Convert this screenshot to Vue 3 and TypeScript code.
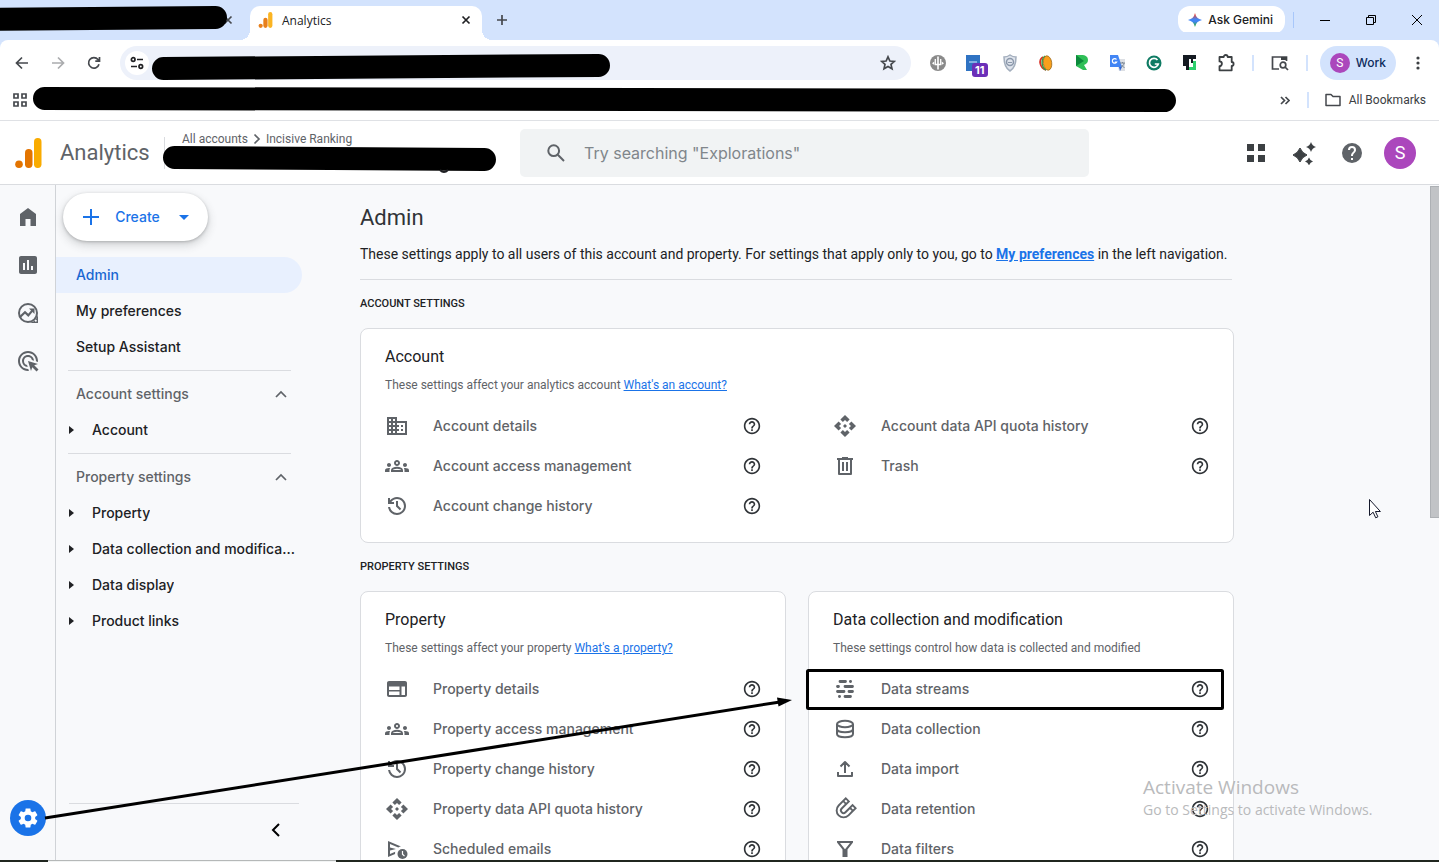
<script setup lang="ts">
import { ref } from 'vue'

interface Row {
  icon: string
  label: string
}

interface NavGroup {
  title: string
  items: string[]
}

const icons: Record<string, string> = {
  home: '<path d="M4 21V9l8-6 8 6v12h-5.5v-7h-5v7z"/>',
  reports:
    '<path d="M19 3H5c-1.1 0-2 .9-2 2v14c0 1.1.9 2 2 2h14c1.1 0 2-.9 2-2V5c0-1.1-.9-2-2-2zM9 17H7v-7h2v7zm4 0h-2V7h2v10zm4 0h-2v-4h2v4z"/>',
  explore:
    '<circle cx="12" cy="12" r="9" fill="none" stroke="currentColor" stroke-width="2"/><path d="M22 12v10H12c5 0 10-4 10-10z"/><circle cx="19.8" cy="19.8" r="1" fill="#f8f9fb"/><path d="M4 16l5-4.800 3.300 3.200 4.200-5" fill="none" stroke="currentColor" stroke-width="2.200"/><path d="M13 7.500h5.500V13z"/>',
  advertising:
    '<path d="M11.710 17.990A5.993 5.993 0 0 1 6 12c0-3.310 2.690-6 6-6 3.220 0 5.840 2.530 5.990 5.710l-2.100-.630a3.999 3.999 0 1 0-4.810 4.810l.630 2.100zM22 12c0 .300-.010.600-.040.900l-1.970-.590c.010-.100.010-.210.010-.310 0-4.420-3.580-8-8-8s-8 3.580-8 8 3.580 8 8 8c.100 0 .210 0 .310-.010l.590 1.970c-.300.030-.600.040-.900.040-5.520 0-10-4.480-10-10S6.480 2 12 2s10 4.480 10 10zm-3.770 4.260L22 15l-10-3 3 10 1.260-3.770 4.270 4.270 1.980-1.980-4.280-4.260z"/>',
  gear:
    '<path d="M19.140 12.940c.040-.300.060-.610.060-.940 0-.320-.020-.640-.070-.940l2.030-1.580c.180-.140.230-.410.120-.610l-1.920-3.320c-.120-.220-.370-.290-.590-.220l-2.390.960c-.500-.380-1.030-.700-1.620-.940l-.360-2.540c-.040-.240-.240-.410-.480-.410h-3.840c-.240 0-.430.170-.470.410l-.360 2.540c-.590.240-1.130.570-1.620.940l-2.390-.960c-.220-.080-.470 0-.590.220L2.740 8.870c-.120.210-.080.470.120.610l2.030 1.580c-.050.300-.090.630-.090.940s.020.640.070.940l-2.030 1.580c-.180.140-.230.410-.120.610l1.920 3.320c.120.220.370.290.590.220l2.390-.960c.500.380 1.030.700 1.620.940l.360 2.540c.050.240.240.410.480.410h3.840c.240 0 .440-.170.470-.410l.360-2.540c.590-.240 1.130-.560 1.620-.940l2.390.960c.220.080.470 0 .590-.220l1.920-3.320c.120-.220.070-.470-.120-.610l-2.010-1.580zM12 15.300a3.300 3.300 0 1 1 0-6.600 3.300 3.300 0 0 1 0 6.600z"/>',
  domain:
    '<path d="M12 7V3H2v18h20V7H12zM6 19H4v-2h2v2zm0-4H4v-2h2v2zm0-4H4V9h2v2zm0-4H4V5h2v2zm4 12H8v-2h2v2zm0-4H8v-2h2v2zm0-4H8V9h2v2zm0-4H8V5h2v2zm10 12h-8v-2h2v-2h-2v-2h2v-2h-2V9h8v10zm-2-8h-2v2h2v-2zm0 4h-2v2h2v-2z"/>',
  groups:
    '<path d="M4 13c1.100 0 2-.900 2-2s-.900-2-2-2-2 .900-2 2 .900 2 2 2zm1.130 1.100c-.370-.060-.740-.100-1.130-.100-.990 0-1.930.210-2.780.580A2.010 2.010 0 0 0 0 16.430V18h4.500v-1.610c0-.830.230-1.610.630-2.290zM20 13c1.100 0 2-.900 2-2s-.900-2-2-2-2 .900-2 2 .900 2 2 2zm4 3.430c0-.810-.480-1.530-1.220-1.850A6.950 6.950 0 0 0 20 14c-.390 0-.760.040-1.130.100.400.680.630 1.460.630 2.290V18H24v-1.570zm-7.760-2.780A10 10 0 0 0 12 12.750c-1.630 0-3.070.390-4.240.900A2.990 2.990 0 0 0 6 16.390V18h12v-1.610c0-1.180-.680-2.260-1.760-2.740zM8.070 16c.090-.230.130-.390.910-.690.970-.380 1.990-.560 3.020-.560s2.050.180 3.020.560c.770.300.810.460.910.690H8.070zM12 8c.550 0 1 .450 1 1s-.450 1-1 1-1-.450-1-1 .450-1 1-1m0-2c-1.660 0-3 1.340-3 3s1.340 3 3 3 3-1.340 3-3-1.340-3-3-3z"/>',
  history:
    '<path d="M12 21q-3.450 0-6.012-2.287T3.050 13H5.100q.350 2.600 2.313 4.300T12 19q2.925 0 4.963-2.037T19 12t-2.037-4.962T12 5q-1.725 0-3.225.800T6.250 8H9v2H3V4h2v2.350q1.275-1.600 3.113-2.475T12 3q1.875 0 3.513.713t2.850 1.924t1.925 2.850T21 12t-.712 3.513t-1.925 2.850t-2.850 1.925T12 21m2.800-4.800L11 12.400V7h2v4.600l3.200 3.200z"/>',
  api:
    '<path d="M14 12l-2 2-2-2 2-2 2 2zm-2-6l2.120 2.120 2.500-2.500L12 1 7.380 5.620l2.500 2.500L12 6zm-6 6l2.120-2.120-2.500-2.500L1 12l4.620 4.620 2.500-2.500L6 12zm12 0l-2.120 2.120 2.500 2.500L23 12l-4.620-4.620-2.500 2.500L18 12zm-6 6l-2.120-2.120-2.500 2.500L12 23l4.620-4.620-2.500-2.500L12 18z"/>',
  trash:
    '<path d="M4 4h5V3h6v1h5v2H4z"/><path d="M6 5v15h12V5M10 8v9M14 8v9" fill="none" stroke="currentColor" stroke-width="2" stroke-linejoin="round"/>',
  web:
    '<path d="M20 4H4c-1.100 0-2 .900-2 2v12c0 1.100.900 2 2 2h16c1.100 0 2-.900 2-2V6c0-1.100-.900-2-2-2zm-5.500 14H4v-3.500h10.500V18zm0-5H4V9.500h10.500V13zm5.500 5h-3.500V9.500H20V18z"/>',
  schedule:
    '<path d="M3 20V4l13 5.500c-1 .100-2 .500-2.700 1L5 7v3.500l6 1.500-6 1.500V17l5.200-2.200c-.200.800-.200 1.500-.100 2.200z"/><circle cx="17.500" cy="17" r="5"/><path d="M17.500 14v3.200l2 2" fill="none" stroke="#fff" stroke-width="1.200"/>',
  streams:
    '<path d="M7 4.500h5.500M17.400 4.500h.200M4.500 9.500h1M12 9.500h7.500M4.500 14.500H11M16 14.500h3.500M6.400 19.500h.200M12 19.500h5.500" fill="none" stroke="currentColor" stroke-width="2.800" stroke-linecap="round"/>',
  database:
    '<g fill="none" stroke="currentColor" stroke-width="2"><ellipse cx="12" cy="7" rx="8" ry="3.200"/><path d="M4 7v10c0 1.900 3.600 3.200 8 3.200s8-1.300 8-3.200V7M4 12c0 1.900 3.600 3.200 8 3.200s8-1.300 8-3.200"/></g>',
  upload:
    '<path d="M12 16V6M7.500 9.500 12 5l4.500 4.500M5 15v4h14v-4" fill="none" stroke="currentColor" stroke-width="2" stroke-linejoin="round"/>',
  magnet:
    '<g transform="rotate(45 12 12)" fill="none"><path d="M7.200 3v11a4.800 4.800 0 0 0 9.600 0V3" stroke="currentColor" stroke-width="6.200" stroke-linejoin="round"/><path d="M7.200 4.800v2M16.800 4.800v2M7.200 8.600V14a4.800 4.800 0 0 0 9.600 0V8.600" stroke="#fff" stroke-width="2.400"/></g>',
  filter:
    '<path d="M4 4h16v1.500L14.500 12.500V20h-5v-7.500L4 5.500zM7 6l5 6.300L17 6z" fill-rule="evenodd"/>',
  help:
    '<path d="M11 18h2v-2h-2v2zm1-16C6.480 2 2 6.480 2 12s4.480 10 10 10 10-4.480 10-10S17.520 2 12 2zm0 18c-4.410 0-8-3.590-8-8s3.590-8 8-8 8 3.590 8 8-3.590 8-8 8zm0-14c-2.210 0-4 1.790-4 4h2c0-1.100.900-2 2-2s2 .900 2 2c0 2-3 1.750-3 5h2c0-2.250 3-2.500 3-5 0-2.210-1.790-4-4-4z"/>',
}

const rail = [
  { icon: 'home', label: 'Home' },
  { icon: 'reports', label: 'Reports' },
  { icon: 'explore', label: 'Explore' },
  { icon: 'advertising', label: 'Advertising' },
]

const groups: NavGroup[] = [
  { title: 'Account settings', items: ['Account'] },
  {
    title: 'Property settings',
    items: ['Property', 'Data collection and modification', 'Data display', 'Product links'],
  },
]

const accountColumns: Row[][] = [
  [
    { icon: 'domain', label: 'Account details' },
    { icon: 'groups', label: 'Account access management' },
    { icon: 'history', label: 'Account change history' },
  ],
  [
    { icon: 'api', label: 'Account data API quota history' },
    { icon: 'trash', label: 'Trash' },
  ],
]

const propertyRows: Row[] = [
  { icon: 'web', label: 'Property details' },
  { icon: 'groups', label: 'Property access management' },
  { icon: 'history', label: 'Property change history' },
  { icon: 'api', label: 'Property data API quota history' },
  { icon: 'schedule', label: 'Scheduled emails' },
]

const dataRows: Row[] = [
  { icon: 'streams', label: 'Data streams' },
  { icon: 'database', label: 'Data collection' },
  { icon: 'upload', label: 'Data import' },
  { icon: 'magnet', label: 'Data retention' },
  { icon: 'filter', label: 'Data filters' },
]

const extensions: { name: string; art: string }[] = [
  {
    name: 'Voice',
    art: '<circle cx="10" cy="10" r="8" fill="#8a8a8a"/><path d="M10 3.500v13" stroke="#fff" stroke-width="1.600" fill="none"/><path d="M7.300 6v5.500h5.400V6" stroke="#fff" stroke-width="1.300" fill="none"/><path d="M6.300 8.500L4 10.300l2.300 1.800zM13.700 8.500l2.300 1.800-2.300 1.800z" fill="#fff"/>',
  },
  {
    name: 'Tags',
    art: '<path d="M2 2h14v16H2z" fill="#2f73c3"/><path d="M5 9h8" stroke="#9fc3ee" stroke-width="1.500"/>',
  },
  {
    name: 'Shield',
    art: '<path d="M10 2c2 1.500 4 2 6 2 0 6-1 11-6 14C5 15 4 10 4 4c2 0 4-.500 6-2z" fill="#dfe4ec" stroke="#a3aebd" stroke-width="1.500"/><circle cx="10" cy="9" r="3.500" fill="none" stroke="#8b98ab" stroke-width="1.500"/><path d="M8 9.500h4" stroke="#8b98ab"/>',
  },
  {
    name: 'Peel',
    art: '<path d="M7 4C2 7 4 15 10 17" stroke="#d93025" stroke-width="1.800" fill="none"/><path d="M9 3C5 6 5 14 10 17" stroke="#34a04a" stroke-width="1.500" fill="none"/><ellipse cx="11.500" cy="10" rx="4.200" ry="7.200" fill="#f9a01b" stroke="#9c6a1d" stroke-width=".800" transform="rotate(-8 11.500 10)"/>',
  },
  {
    name: 'Ribbon',
    art: '<path d="M4 2h5c5 0 7 2 7 5s-2 4-4 5l3 5h-4L4 13z" fill="#2fbf57"/><path d="M4 2v11l8-5z" fill="#0c8a3c"/>',
  },
  {
    name: 'Translate',
    art: '<path d="M8 6h9v12h-6z" fill="#dcdfe4"/><path d="M2 2h8l4 12H2z" fill="#4285f4"/><path d="M11 14h3l-2 4z" fill="#3367d6"/><path d="M8.500 6.500A2.300 2.300 0 1 0 8.700 9H6.800" stroke="#fff" stroke-width="1.200" fill="none"/><path d="M12 10h5M14.500 9v1M16 10c0 2-2 4-3 4M13.500 12l3 3" stroke="#7b8794" stroke-width="1" fill="none"/>',
  },
  {
    name: 'Grammar',
    art: '<circle cx="10" cy="10" r="7.500" fill="#0f7b63"/><path d="M13.500 7A4.500 4.500 0 1 0 14.300 11h-3.500" stroke="#fff" stroke-width="1.700" fill="none"/>',
  },
  {
    name: 'Headline',
    art: '<path d="M3 2h13v4h-3v4h-2V6H9v11H6V6H3z" fill="#151a22"/><path d="M3 2h3v11H3z" fill="#151a22"/><path d="M13 8h3v9H9v-3h4z" fill="#2fd06e"/>',
  },
  {
    name: 'Extensions',
    art: '<path d="M3.500 4h4.200a2 2 0 0 1 4 0h4v5a1.900 1.900 0 0 1 0 3.800v4.500H3.500v-4.100a2.400 2.400 0 0 0 0-4.800z" fill="none" stroke="#3c4043" stroke-width="1.800" stroke-linejoin="round"/>',
  },
]

const query = ref('')
</script>

<template>
  <div class="page">
    <header class="tabstrip">
      <div class="tab-hidden"><button class="plain" aria-label="Close hidden tab"><svg width="10" height="10" viewBox="0 0 10 10"><path d="M1.500 1.500l7 7M8.500 1.500l-7 7" class="line-gray" /></svg></button></div>
      <div class="tab">
        <svg width="16" height="16" viewBox="0 0 28 30"><rect x="18" width="8" height="30" rx="4" fill="#fbb422" /><rect x="9" y="11" width="8" height="19" rx="4" fill="#e8801c" /><circle cx="4" cy="26" r="4" fill="#e8801c" /></svg>
        <span class="tab-title">Analytics</span>
        <button class="plain" aria-label="Close tab"><svg width="10" height="10" viewBox="0 0 10 10"><path d="M1.500 1.500l7 7M8.500 1.500l-7 7" class="line-dark" /></svg></button>
      </div>
      <button class="plain new-tab" aria-label="New tab"><svg width="12" height="12" viewBox="0 0 12 12"><path d="M6 1v10M1 6h10" class="line-gray" /></svg></button>
      <button class="gemini">
        <svg width="14" height="14" viewBox="0 0 14 14">
          <defs>
            <linearGradient id="spark" x1="0" y1="0" x2="0" y2="1">
              <stop offset="0.100" stop-color="#ea4335" />
              <stop offset="0.450" stop-color="#4285f4" />
              <stop offset="0.600" stop-color="#4285f4" />
              <stop offset="0.900" stop-color="#34a853" />
            </linearGradient>
          </defs>
          <path d="M7 0Q8.200 5.800 14 7 8.200 8.200 7 14 5.800 8.200 0 7 5.800 5.800 7 0z" fill="url(#spark)" />
        </svg>
        Ask Gemini
      </button>
      <span class="strip-sep"></span>
      <button class="win" aria-label="Minimize"><svg width="10" height="10" viewBox="0 0 10 10"><path d="M0 5.500h10" class="line-thin" /></svg></button>
      <button class="win" aria-label="Restore"><svg width="10" height="10" viewBox="0 0 10 10"><path d="M.500 2.500h7v7h-7zM2.500 2.500v-2h7v7h-2" class="line-thin" /></svg></button>
      <button class="win" aria-label="Close"><svg width="10" height="10" viewBox="0 0 10 10"><path d="M0 0l10 10M10 0L0 10" class="line-thin" /></svg></button>
    </header>

    <div class="toolbar">
      <button class="tool" aria-label="Back"><svg width="14" height="14" viewBox="0 0 14 14"><path d="M13 7H2M7 1.500L1.500 7 7 12.500" class="line-nav" /></svg></button>
      <button class="tool faded" aria-label="Forward"><svg width="14" height="14" viewBox="0 0 14 14"><path d="M1 7h11M7 1.500L12.500 7 7 12.500" class="line-nav" /></svg></button>
      <button class="tool" aria-label="Reload"><svg width="14" height="14" viewBox="0 0 14 14"><path d="M12 8.300A5.300 5.300 0 1 1 11 3.500L12.300 5M12.500 1v4.200H8.300" class="line-nav" /></svg></button>
      <div class="omnibox">
        <button class="site-info" aria-label="Site information"><svg width="14" height="14" viewBox="0 0 14 14"><path d="M7 3.500h6M1 10.500h6" class="line-dark" /><circle cx="3.200" cy="3.500" r="1.800" class="line-dark" /><circle cx="10.800" cy="10.500" r="1.800" class="line-dark" /></svg></button>
        <button class="tool" aria-label="Bookmark this tab"><svg width="16" height="16" viewBox="0 0 16 16"><path d="M8 1.800l1.900 4.200 4.500.400-3.400 3 1 4.400L8 11.500l-4 2.300 1-4.400-3.400-3 4.500-.400z" class="line-nav" /></svg></button>
      </div>
      <button v-for="ext in extensions" :key="ext.name" class="tool ext" :aria-label="ext.name">
        <svg width="20" height="20" viewBox="0 0 20 20" v-html="ext.art"></svg>
        <span v-if="ext.name === 'Tags'" class="badge">11</span>
      </button>
      <span class="bar-sep"></span>
      <button class="tool" aria-label="Side panel"><svg width="18" height="16" viewBox="0 0 18 16"><path d="M8 14H1.500V2h14v4" class="line-nav" /><path d="M10 2h6v3h-6z" fill="#3c4043" /><circle cx="12" cy="10" r="2.800" class="line-nav" /><path d="M14 12l3 3" class="line-nav" /></svg></button>
      <span class="bar-sep"></span>
      <button class="profile"><span class="dot">S</span>Work</button>
      <button class="tool menu" aria-label="Browser menu"><svg width="4" height="14" viewBox="0 0 4 14"><circle cx="2" cy="2" r="1.600" /><circle cx="2" cy="7" r="1.600" /><circle cx="2" cy="12" r="1.600" /></svg></button>
    </div>

    <div class="bookmarks">
      <button class="tool" aria-label="Apps"><svg width="14" height="14" viewBox="0 0 14 14"><path d="M1 1h4v4H1zM9 1h4v4H9zM1 9h4v4H1zM9 9h4v4H9z" class="line-nav" /></svg></button>
      <button class="tool more" aria-label="More bookmarks"><svg width="10" height="9" viewBox="0 0 10 9"><path d="M1 1l3.500 3.500L1 8M5.500 1L9 4.500 5.500 8" class="line-nav" /></svg></button>
      <span class="bar-sep"></span>
      <button class="all-bookmarks"><svg width="16" height="14" viewBox="0 0 16 14"><path d="M1 12.500v-11h5l2 2h7v9z" class="line-folder" /></svg>All Bookmarks</button>
    </div>

    <header class="app-header">
      <div class="brand">
        <svg width="28" height="30" viewBox="0 0 28 30"><rect x="19" width="7.500" height="30" rx="3.700" fill="#f9ab00" /><rect x="10" y="11" width="7.500" height="19" rx="3.700" fill="#e37400" /><circle cx="4" cy="26.200" r="3.800" fill="#e37400" /></svg>
        <span class="product">Analytics</span>
        <div class="crumbs">
          <span>All accounts</span>
          <svg width="8" height="12" viewBox="0 0 8 12"><path d="M1.500 1.500L6 6l-4.500 4.500" class="line-crumb" /></svg>
          <span>Incisive Ranking</span>
        </div>
      </div>
      <label class="search">
        <svg width="20" height="20" viewBox="0 0 20 20"><circle cx="7.700" cy="7.700" r="5.400" class="line-search" /><path d="M11.800 11.800l6.200 6.200" class="line-search" /></svg>
        <input v-model="query" type="search" aria-label="Search" placeholder='Try searching "Explorations"' />
      </label>
      <div class="header-actions">
        <button class="action" aria-label="Products"><svg width="18" height="18" viewBox="0 0 18 18"><path d="M0 0h7v7H0zM11 0h7v7h-7zM0 11h7v7H0zM11 11h7v7h-7z" /></svg></button>
        <button class="action" aria-label="Insights"><svg width="24" height="24" viewBox="0 0 24 24"><path d="M8 7Q10 12 15 14 10 16 8 21 6 16 1 14 6 12 8 7z" stroke="currentColor" /><path d="M19 1Q20.200 4.800 24 6 20.200 7.200 19 11 17.800 7.200 14 6 17.800 4.800 19 1zM17 16.500q1 3 4 4-3 1-4 4-1-3-4-4 3-1 4-4z" /></svg></button>
        <button class="action soft" aria-label="Help"><svg width="24" height="24" viewBox="0 0 24 24"><path d="M12 2a10 10 0 1 0 0 20 10 10 0 0 0 0-20zm1 17h-2v-2h2v2zm2.070-7.750l-.900.920C13.450 12.900 13 13.500 13 15h-2v-.500c0-1.100.450-2.100 1.170-2.830l1.240-1.260c.370-.360.590-.860.590-1.410a2 2 0 0 0-4 0H8a4 4 0 0 1 8 0c0 .880-.360 1.680-.930 2.250z" /></svg></button>
        <button class="avatar" aria-label="Account S">S</button>
      </div>
    </header>

    <div class="body">
      <nav class="rail" aria-label="Sections">
        <a v-for="item in rail" :key="item.icon" href="#" :aria-label="item.label"><svg width="24" height="24" viewBox="0 0 24 24" v-html="icons[item.icon]"></svg></a>
        <a href="#" class="admin-link" aria-label="Admin"><svg width="24" height="24" viewBox="0 0 24 24" v-html="icons.gear"></svg></a>
      </nav>

      <aside class="sidebar">
        <button class="create">
          <svg width="18" height="18" viewBox="0 0 18 18"><path d="M9 1v16M1 9h16" class="line-plus" /></svg>
          <span>Create</span>
          <svg class="caret" width="10" height="5" viewBox="0 0 10 5"><path d="M0 0h10L5 5z" /></svg>
        </button>
        <nav class="menu-list" aria-label="Admin navigation">
          <a href="#" class="nav-item active" aria-current="page">Admin</a>
          <a href="#" class="nav-item">My preferences</a>
          <a href="#" class="nav-item">Setup Assistant</a>
          <section v-for="group in groups" :key="group.title" class="nav-group">
            <button class="group-title" aria-expanded="true">
              {{ group.title }}
              <svg width="12" height="8" viewBox="0 0 12 8"><path d="M1 7l5-5 5 5" class="line-chevron" /></svg>
            </button>
            <a v-for="item in group.items" :key="item" href="#" class="nav-item nested">
              <svg width="5" height="8" viewBox="0 0 5 8"><path d="M0 0l5 4-5 4z" /></svg>
              <span>{{ item }}</span>
            </a>
          </section>
        </nav>
        <div class="collapse">
          <button class="plain" aria-label="Collapse navigation"><svg width="10" height="14" viewBox="0 0 10 14"><path d="M8 1L2 7l6 6" class="line-collapse" /></svg></button>
        </div>
      </aside>

      <main class="main">
        <div class="content">
          <h1>Admin</h1>
          <p class="intro">These settings apply to all users of this account and property. For settings that apply only to you, go to <a href="#">My preferences</a> in the left navigation.</p>
          <h2>ACCOUNT SETTINGS</h2>
          <section class="card">
            <h3>Account</h3>
            <p>These settings affect your analytics account <a href="#">What's an account?</a></p>
            <div class="columns">
              <ul v-for="(column, index) in accountColumns" :key="index">
                <li v-for="row in column" :key="row.label">
                  <a href="#"><svg width="24" height="24" viewBox="0 0 24 24" v-html="icons[row.icon]"></svg>{{ row.label }}</a>
                  <button class="help" :aria-label="'About ' + row.label"><svg width="18" height="18" viewBox="1 1 22 22" v-html="icons.help"></svg></button>
                </li>
              </ul>
            </div>
          </section>
          <h2>PROPERTY SETTINGS</h2>
          <div class="cards">
            <section class="card">
              <h3>Property</h3>
              <p>These settings affect your property <a href="#">What's a property?</a></p>
              <ul>
                <li v-for="row in propertyRows" :key="row.label">
                  <a href="#"><svg width="24" height="24" viewBox="0 0 24 24" v-html="icons[row.icon]"></svg>{{ row.label }}</a>
                  <button class="help" :aria-label="'About ' + row.label"><svg width="18" height="18" viewBox="1 1 22 22" v-html="icons.help"></svg></button>
                </li>
              </ul>
            </section>
            <section class="card">
              <h3>Data collection and modification</h3>
              <p>These settings control how data is collected and modified</p>
              <ul>
                <li v-for="row in dataRows" :key="row.label">
                  <a href="#"><svg width="24" height="24" viewBox="0 0 24 24" v-html="icons[row.icon]"></svg>{{ row.label }}</a>
                  <button class="help" :aria-label="'About ' + row.label"><svg width="18" height="18" viewBox="1 1 22 22" v-html="icons.help"></svg></button>
                </li>
              </ul>
            </section>
          </div>
        </div>
        <div class="scroll-thumb"></div>
      </main>
    </div>

    <footer class="taskbar"><span class="taskbar-search"></span></footer>

    <div class="watermark">
      <div class="mark-title">Activate Windows</div>
      <div class="mark-text">Go to Settings to activate Windows.</div>
    </div>

    <svg class="annotations" aria-hidden="true">
      <g stroke="#000" stroke-width="23" stroke-linecap="round">
        <path d="M-20 19.500L215.500 17.500" />
        <path d="M163.500 68.500L598.500 65.500" />
        <path d="M44.500 98.500L1164.500 100.500" />
        <path d="M174.500 157.500L484.500 159.500" />
      </g>
      <path d="M440 170q4 4 8 0" fill="none" stroke="#202124" stroke-width="2" />
      <path d="M45 818L780 702" stroke="#000" stroke-width="3" />
      <path d="M777 697.500L792 700 778.500 706.500z" />
      <rect x="807.500" y="670.500" width="415" height="38" rx="1" fill="none" stroke="#000" stroke-width="3" />
      <path d="M1369.500 499.500v16l3.600-3.300 2.600 5.600 2.200-1-2.500-5.300h5z" fill="#fff" stroke="#14182b" />
    </svg>
  </div>
</template>

<style>
body {
  margin: 0;
}
</style>

<style scoped>
* {
  box-sizing: border-box;
}

.page {
  position: relative;
  display: flex;
  flex-direction: column;
  height: 100vh;
  overflow: hidden;
  background: #f8f9fb;
  color: #202124;
  font-family: Roboto, "Liberation Sans", sans-serif;
  font-size: 14px;
}

button {
  display: flex;
  align-items: center;
  justify-content: center;
  padding: 0;
  border: 0;
  background: none;
  color: inherit;
  font: inherit;
}

a {
  color: inherit;
  text-decoration: none;
}

svg {
  flex: none;
  display: block;
  fill: currentColor;
}

.line-dark,
.line-gray,
.line-nav,
.line-thin,
.line-folder,
.line-crumb,
.line-search,
.line-plus,
.line-chevron,
.line-collapse {
  fill: none;
  stroke: #202124;
  stroke-width: 1.7;
}

.line-gray,
.line-nav {
  stroke: #45484d;
}

.line-thin {
  stroke: #000;
  stroke-width: 1;
}

.line-folder {
  stroke: #45484d;
  stroke-width: 1.5;
  stroke-linejoin: round;
}

.line-crumb,
.line-search,
.line-chevron {
  stroke: #5f6368;
}

.line-search,
.line-plus,
.line-collapse {
  stroke-width: 2;
}

.line-plus {
  stroke: #1a73e8;
}

.line-collapse {
  stroke: #000;
}

/* Browser frame */
.tabstrip {
  flex: none;
  display: flex;
  align-items: center;
  height: 40px;
  background: #d3e3fd;
}

.tab-hidden {
  display: flex;
  justify-content: flex-end;
  width: 250px;
  padding-right: 17px;
}

.tab {
  position: relative;
  align-self: flex-end;
  display: flex;
  align-items: center;
  gap: 8px;
  width: 232px;
  height: 34px;
  padding: 0 11px 6px 8px;
  border-radius: 10px 10px 0 0;
  background: #fff;
}

.tab::before,
.tab::after {
  content: "";
  position: absolute;
  bottom: 0;
  left: -10px;
  width: 10px;
  height: 10px;
  background: radial-gradient(circle at 0 0, transparent 10px, #fff 10px);
}

.tab::after {
  left: 100%;
  background: radial-gradient(circle at 100% 0, transparent 10px, #fff 10px);
}

.tab-title {
  flex: 1;
  padding-top: 2px;
  font: 12px/16px "Open Sans", "Noto Sans", sans-serif;
}

.new-tab {
  margin: 0 auto 0 14px;
}

.gemini {
  gap: 6px;
  height: 28px;
  padding: 0 12px 0 10px;
  border-radius: 12px;
  background: #fff;
  font: 500 12px/16px Inter, Roboto, sans-serif;
}

.strip-sep {
  width: 1px;
  height: 16px;
  margin: 0 8px;
  background: #a8c7fa;
}

.win {
  width: 46px;
  height: 40px;
}

.win:last-child {
  margin-right: -1px;
}

.toolbar {
  flex: none;
  display: flex;
  align-items: center;
  height: 46px;
  padding: 0 3px 0 4px;
  border-radius: 8px 8px 0 0;
  background: #fff;
  box-shadow: 0 -8px 0 0 #d3e3fd;
  clip-path: none;
}

.tool {
  position: relative;
  flex: none;
  width: 36px;
  height: 34px;
}

.faded {
  opacity: 0.45;
}

.omnibox {
  flex: 1;
  display: flex;
  align-items: center;
  justify-content: space-between;
  height: 34px;
  margin: 0 9px 0 8px;
  padding: 0 5px;
  border-radius: 17px;
  background: #edf1fa;
}

.site-info {
  width: 24px;
  height: 24px;
  border-radius: 12px;
  background: #fff;
}

.badge {
  position: absolute;
  right: 4px;
  bottom: 3px;
  width: 16px;
  height: 14px;
  border-radius: 3px;
  background: #6b2fb8;
  color: #fff;
  font: 700 11px/14px Inter, sans-serif;
  text-align: center;
}

.bar-sep {
  flex: none;
  width: 2px;
  height: 16px;
  margin: 0 8px;
  background: #d3e3fd;
}

.profile {
  flex: none;
  gap: 6px;
  height: 34px;
  margin-left: 4px;
  padding: 0 10px;
  border-radius: 17px;
  background: #d3e3fd;
  color: #0b2a5b;
  font: 500 12px/16px Inter, Roboto, sans-serif;
}

.dot {
  width: 20px;
  height: 20px;
  border-radius: 10px;
  background: #ab47bc;
  color: #fff;
  font: 12px/20px Roboto, sans-serif;
}

.menu {
  margin-left: 4px;
  color: #3c4043;
}

.bookmarks {
  flex: none;
  display: flex;
  align-items: center;
  height: 35px;
  padding: 0 13px 6px 2px;
  border-bottom: 1px solid #dfe1e5;
  background: #fff;
}

.more {
  margin-left: auto;
}

.bookmarks .bar-sep {
  margin: 0 16px 0 4px;
}

.all-bookmarks {
  gap: 8px;
  color: #3c4043;
  font: 12px/16px Roboto, "Noto Sans", sans-serif;
}

/* Analytics header */
.app-header {
  flex: none;
  display: flex;
  align-items: center;
  height: 64px;
  padding-right: 15px;
  border-bottom: 1px solid #dadce0;
  background: #fff;
}

.brand {
  flex: none;
  display: flex;
  align-items: center;
  width: 520px;
  padding-left: 15px;
}

.product {
  width: 121px;
  padding-left: 17px;
  color: #5f6368;
  font: 22px/32px Roboto, sans-serif;
}

.crumbs {
  display: flex;
  align-items: flex-start;
  gap: 5px;
  height: 32px;
  padding-left: 17px;
  border-left: 1px solid #dadce0;
  color: #5f6368;
  font-size: 12px;
  line-height: 4px;
}

.crumbs svg {
  margin-top: -4px;
}

.search {
  flex: 0 1 569px;
  display: flex;
  align-items: center;
  gap: 18px;
  height: 48px;
  padding: 0 26px;
  border-radius: 5px;
  background: #f1f3f4;
}

.search input {
  flex: 1;
  min-width: 0;
  padding: 0;
  border: 0;
  outline: 0;
  background: none;
  color: #202124;
  font: 16px/24px Inter, Roboto, sans-serif;
}

.search input::placeholder {
  color: #80868b;
  opacity: 1;
}

.header-actions {
  display: flex;
  align-items: center;
  margin-left: auto;
}

.action,
.avatar {
  flex: none;
  width: 48px;
  height: 48px;
  color: #3c4043;
}

.soft {
  color: #5f6368;
}

.avatar {
  width: 32px;
  height: 32px;
  margin: 0 8px;
  border-radius: 16px;
  background: #ab47bc;
  color: #fff;
  font-size: 18px;
}

/* Body */
.body {
  flex: 1;
  display: flex;
  min-height: 0;
}

.rail {
  flex: none;
  display: flex;
  flex-direction: column;
  align-items: center;
  width: 56px;
  padding: 8px 0 24px;
  border-right: 1px solid #d0d3d7;
  color: #5f6368;
}

.rail a {
  display: flex;
  align-items: center;
  justify-content: center;
  width: 48px;
  height: 48px;
}

.rail .admin-link {
  width: 36px;
  height: 36px;
  margin-top: auto;
  border-radius: 18px;
  background: #1a73e8;
  color: #fff;
}

.sidebar {
  flex: none;
  display: flex;
  flex-direction: column;
  width: 246px;
  padding-top: 8px;
  font: 500 14px/20px Inter, Roboto, sans-serif;
}

.create {
  flex: none;
  gap: 15px;
  width: 145px;
  height: 48px;
  margin: 0 0 16px 7px;
  border-radius: 24px;
  background: #fff;
  color: #1a73e8;
  box-shadow: 0 1px 3px rgba(60, 64, 67, 0.3), 0 4px 8px 1px rgba(60, 64, 67, 0.18);
}

.caret {
  margin-left: 4px;
}

.nav-item {
  display: flex;
  align-items: center;
  height: 36px;
  padding-left: 20px;
  border-radius: 0 18px 18px 0;
}

.active {
  background: #e8f0fe;
  color: #1967d2;
}

.nested {
  gap: 18px;
  padding: 0 4px 0 13px;
}

.nested span {
  overflow: hidden;
  text-overflow: ellipsis;
  white-space: nowrap;
}

.nav-group {
  margin-top: 5px;
}

.nav-group::before {
  content: "";
  display: block;
  height: 1px;
  margin: 0 11px 5px 12px;
  background: #dadce0;
}

.group-title {
  justify-content: space-between;
  width: 100%;
  height: 36px;
  padding: 0 15px 0 20px;
  color: #5f6368;
}

.collapse {
  display: flex;
  align-items: center;
  justify-content: flex-end;
  height: 57px;
  margin: auto 3px 0 13px;
  padding: 0 18px 4px 0;
  border-top: 1px solid #dadce0;
}

.main {
  position: relative;
  flex: 1;
  min-width: 0;
  padding: 19px 68px 0 58px;
  overflow: hidden;
}

.content {
  max-width: 874px;
}

.scroll-thumb {
  position: absolute;
  top: 1px;
  right: 0;
  width: 9px;
  height: 332px;
  border: 1px solid #adb0b4;
  border-right: 0;
  background: #c1c3c6;
}

h1,
h2,
h3,
p,
ul {
  margin: 0;
  padding: 0;
  list-style: none;
}

h1 {
  margin-bottom: 12px;
  color: #303337;
  font: 22px/28px Roboto, sans-serif;
}

.intro {
  margin-right: 2px;
  padding-bottom: 15px;
  border-bottom: 1px solid #dadce0;
  line-height: 20px;
  white-space: nowrap;
}

.intro a {
  color: #1a73e8;
  font-weight: 700;
  text-decoration: underline;
}

h2 {
  margin: 16px 0;
  font: 500 11px/16px Roboto, sans-serif;
}

.cards {
  display: grid;
  grid-template-columns: 1fr 1fr;
  gap: 22px;
}

.card {
  min-width: 0;
  padding: 16px 24px;
  border: 1px solid #dadce0;
  border-radius: 8px;
  background: #fff;
}

h3 {
  margin-bottom: 8px;
  font: 16px/24px Roboto, sans-serif;
}

.card p {
  margin-bottom: 13px;
  color: #5f6368;
  font-size: 12px;
  line-height: 16px;
}

.card p a {
  color: #1a73e8;
  text-decoration: underline;
}

.columns {
  display: grid;
  grid-template-columns: 1fr 1fr;
  gap: 72px;
}

li {
  display: flex;
  align-items: center;
  justify-content: space-between;
  height: 40px;
  color: #5f6368;
  font: 500 14px/20px Inter, Roboto, sans-serif;
}

li a {
  display: flex;
  align-items: center;
  gap: 24px;
}

.help {
  color: #303438;
}

.taskbar {
  flex: none;
  display: flex;
  height: 2px;
  padding-left: 48px;
  background: #20261f;
}

.taskbar-search {
  width: 288px;
  border-top: 1px solid #b5b8b8;
  background: #f2f4f4;
}

.watermark {
  position: absolute;
  right: 60px;
  bottom: 42px;
  width: 236px;
  color: #b9babc;
  font-family: "Open Sans", "Noto Sans", sans-serif;
  white-space: nowrap;
  pointer-events: none;
}

.mark-title {
  font-size: 19px;
  line-height: 26px;
}

.mark-text {
  font-size: 14px;
  line-height: 20px;
}

.annotations {
  position: absolute;
  inset: 0;
  width: 100%;
  height: 100%;
  fill: #000;
  pointer-events: none;
}
</style>
